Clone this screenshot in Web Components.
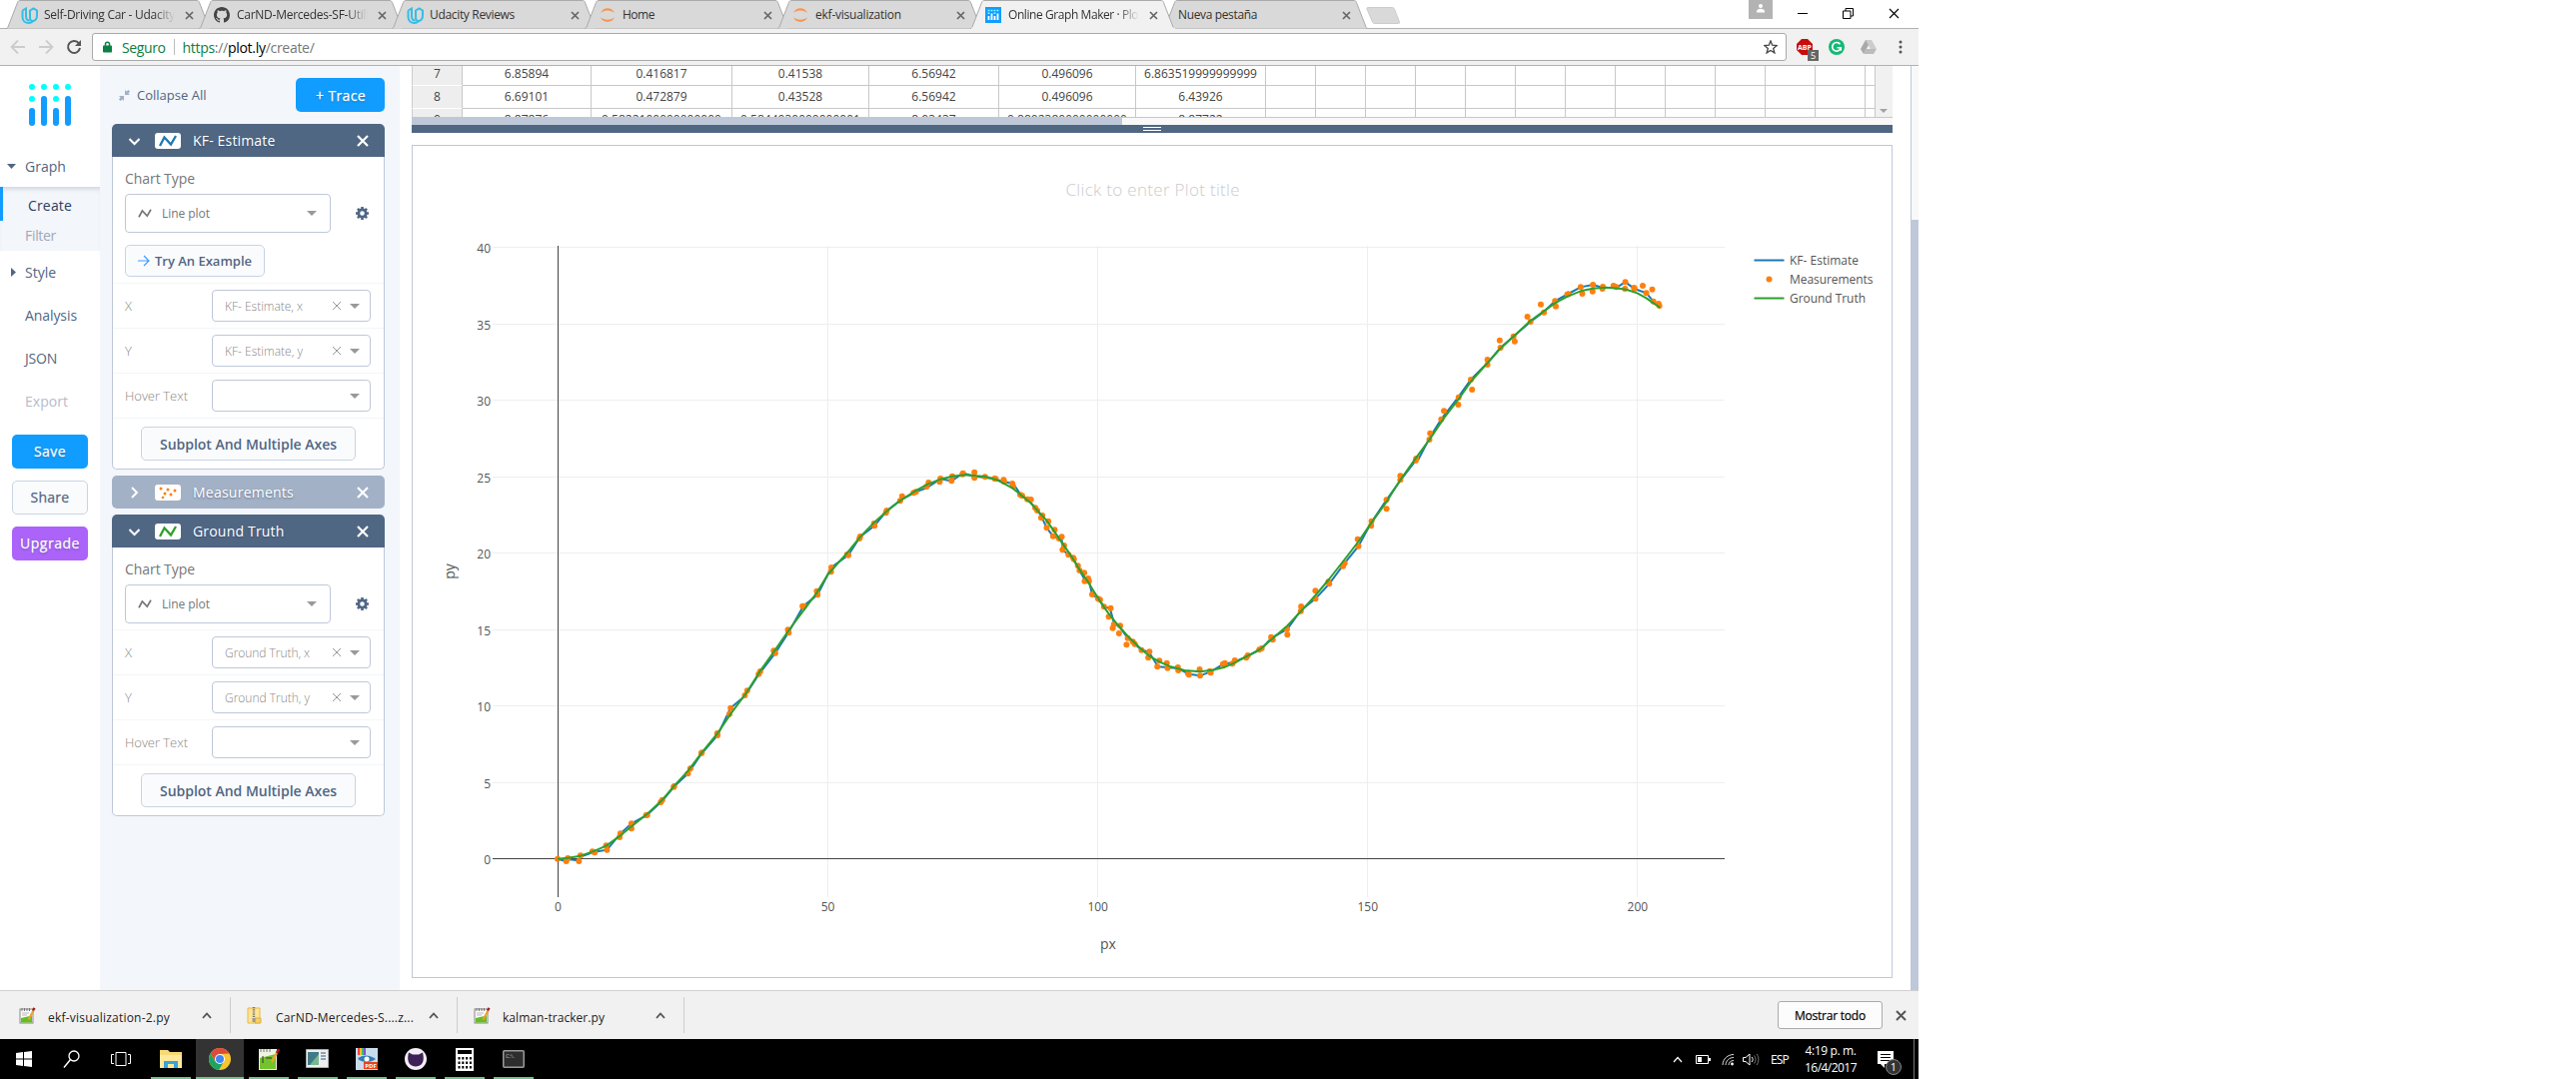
<!DOCTYPE html>
<html lang="es">
<head>
<meta charset="utf-8">
<title>Online Graph Maker · Plotly</title>
<style>
html,body{margin:0;background:#fff}
body{width:2578px;height:1080px;overflow:hidden;font-family:"Open Sans","Noto Sans",sans-serif;font-size:12px;color:#444}
</style>
</head>
<body>
<desktop-screen></desktop-screen>
<script>
const define = (name, render) => customElements.define(name, class extends HTMLElement {
  constructor() { super(); this.attachShadow({ mode: 'open' }); }
  connectedCallback() {
    if (this.ready) return;
    this.ready = true;
    this.shadowRoot.innerHTML = render(this);
  }
});
const svg = (w, h, body, extra = '') => `<svg width="${w}" height="${h}" viewBox="0 0 ${w} ${h}" fill="none" ${extra}>${body}</svg>`;
const base = ':host{box-sizing:border-box}svg{display:block;flex:none}*{box-sizing:border-box}';

const icons = {
  udacity: svg(17, 17, '<path d="M1.500 3.500 5 1.500V9c0 3 1.500 4.500 3.500 4.500" stroke="#35bde6" stroke-width="2"/><path d="M1.500 3.500V10c0 4 3 6 6 6s4-1 5-2.500" stroke="#35bde6" stroke-width="2"/><path d="M9 3.500 12.500 1.500 16 3.500V8c0 4-2 6-4.500 6S9 12 9 9z" stroke="#35bde6" stroke-width="2"/>'),
  github: svg(16, 16, '<path fill="#444" d="M8 0C3.580 0 0 3.580 0 8c0 3.540 2.290 6.530 5.470 7.590.4.070.55-.17.55-.38 0-.19-.01-.82-.01-1.490-2.010.37-2.530-.49-2.690-.94-.09-.23-.48-.94-.82-1.130-.28-.15-.68-.52-.01-.53.63-.01 1.080.58 1.230.82.72 1.210 1.870.87 2.330.66.07-.52.28-.87.51-1.070-1.780-.2-3.640-.89-3.640-3.950 0-.87.31-1.590.82-2.150-.08-.2-.36-1.020.08-2.120 0 0 .67-.21 2.200.82.64-.18 1.320-.27 2-.27s1.360.09 2 .27c1.530-1.040 2.200-.82 2.200-.82.44 1.100.16 1.920.08 2.120.51.56.82 1.270.82 2.150 0 3.070-1.870 3.750-3.650 3.950.29.25.54.73.54 1.480 0 1.070-.01 1.930-.01 2.200 0 .21.15.46.55.38A8.010 8.010 0 0 0 16 8c0-4.420-3.580-8-8-8z"/>'),
  jupyter: svg(16, 16, '<path fill="#f79450" d="M1 6C3-.5 13-.5 15 6 12 2.500 4 2.500 1 6zM1 10c2 6.500 12 6.500 14 0-3 3.500-11 3.500-14 0z"/>'),
  plotly: svg(16, 16, '<rect width="16" height="16" fill="#119dff"/><path d="M3.500 13v-4M6.500 13V6.500M9.500 13v-4M12.500 13V6.500" stroke="#fff" stroke-width="1.800"/><path d="M2.600 3.500h1.800m1.200 0h1.800m1.200 0h1.800m1.200 0h1.800M2.600 6.300h1.800m4.200 0h1.800" stroke="#8ff" stroke-width="1.500"/>'),
  none: '',
  note: svg(17, 17, '<rect x="1" y="2" width="13" height="14" fill="#fafafa" stroke="#888"/><path d="M2 15.500v-4.500l11-2.500v7z" fill="#66bd23"/><path d="M3 1v3m2.500-3v3M8 1v3m2.500-3v3" stroke="#777"/><path d="M3 6h7M3 8h5" stroke="#bbb"/><path d="m9.500 12.500 5-9" stroke="#f0a021" stroke-width="2"/><path d="m14 3.500 1.500-2.600" stroke="#a5181b" stroke-width="2.400"/>'),
  zip: svg(15, 17, '<path d="M1 1h12v15H1z" fill="#ffe594" stroke="#e3b94e"/><path d="M8 11h6v5H8z" fill="#f6cf62" stroke="#dfb143"/><path d="M7 0v12" stroke="#767676" stroke-width="2.400" stroke-dasharray="1.200 1"/><rect x="5.500" y="11" width="3" height="4" fill="#999"/>')
};
const caret = (c = '#999') => svg(10, 5, `<path d="M0 0h10L5 5z" fill="${c}"/>`);
const cross = (s, c, w) => svg(s, s, `<path d="M1 1 ${s-1} ${s-1}M${s-1} 1 1 ${s-1}" stroke="${c}" stroke-width="${w}"/>`);
const zig = (c, w, h) => `<svg width="${w}" height="${h}" viewBox="0 0 18 12" fill="none"><path d="M1 11 5.500 2.500 12 9.500 17 1" stroke="${c}" stroke-width="2.300"/></svg>`;

/* ---------- browser window ---------- */
define('browser-tab', el => {
  const active = el.hasAttribute('active'), fill = active ? '#f1f1f1' : '#d9d9d9';
  const icon = icons[el.getAttribute('icon') || 'none'];
  return `<style>${base}
  :host{display:flex;position:relative;width:193px;height:29px;align-items:center;flex:none;z-index:${active ? 2 : 0};color:#333}
  .bg{position:absolute;left:-6px;top:0}
  .row{position:relative;display:flex;align-items:center;width:168px;margin-left:9px;height:29px;padding-top:1px}
  .ic{width:23px;flex:none}.t{flex:1;height:20px;line-height:20px;overflow:hidden;white-space:nowrap}
  .fade{-webkit-mask:linear-gradient(90deg,#000 84%,transparent);mask:linear-gradient(90deg,#000 84%,transparent)}
  .x{width:10px;margin-left:10px;margin-right:-6px}</style>
  <div class="bg">${svg(207, 29, `<path d="M0 28.500c1 0 1.500-.5 2-1.500L11.500 2.500C12 1 13 .5 14 .5h177c1 0 2 .5 2.500 2L203 27c.5 1 1 1.500 2 1.500" fill="${fill}" stroke="#aaa"/>${active ? '<path d="M1 28.500h204" stroke="#f1f1f1" stroke-width="1.500"/>' : ''}`)}</div>
  <div class="row">${icon ? `<div class="ic">${icon}</div>` : ''}<div class="t ${el.hasAttribute('fade') ? 'fade' : ''}"><slot></slot></div><div class="x">${cross(9, '#666', 1.7)}</div></div>`;
});
define('browser-tabs', () => `<style>${base}
  :host{display:flex;height:29px;box-shadow:inset 0 -1px #b1b1b1;padding-left:12px;background:#fff}
  .new{margin:7px 0 0 4px}.user{margin-left:348px;width:24px;height:19px;background:#b3b3b3;padding:4px 7px}
  .win{display:flex;align-items:center;height:26px;margin-left:25px;gap:35px}</style>
  <browser-tab icon="udacity" fade><fit-text w="131">Self-Driving Car - Udacity</fit-text></browser-tab>
  <browser-tab icon="github" fade><fit-text w="136">CarND-Mercedes-SF-Utilit</fit-text></browser-tab>
  <browser-tab icon="udacity"><fit-text w="85">Udacity Reviews</fit-text></browser-tab>
  <browser-tab icon="jupyter"><fit-text w="32">Home</fit-text></browser-tab>
  <browser-tab icon="jupyter"><fit-text w="86">ekf-visualization</fit-text></browser-tab>
  <browser-tab icon="plotly" active fade><fit-text w="134">Online Graph Maker · Plot</fit-text></browser-tab>
  <browser-tab><fit-text w="79">Nueva pestaña</fit-text></browser-tab>
  <div class="new">${svg(35, 18, '<path d="M2 .5h24c1 0 2 .5 2.500 1.500l5 13c.4 1-.2 1.500-1 1.500H9c-1 0-2-.5-2.500-1.500L1 2C.6 1 1 .5 2 .5z" fill="#d9d9d9" stroke="#ccc"/>')}</div>
  <div class="user">${svg(10, 10, '<circle cx="5" cy="2" r="2" fill="#fff"/><path d="M1 8.500V7c1-3 7-3 8 0v1.500z" fill="#fff"/>')}</div>
  <div class="win">${svg(10, 10, '<path d="M0 5.500h10" stroke="#000"/>')}${svg(11, 11, '<path d="M.5 3h7.500v7.500H.5zM3 3V.5h7.500V8H8" stroke="#000"/>')}${cross(11, '#000', 1.1)}</div>`);
define('browser-toolbar', () => `<style>${base}
  :host{display:flex;height:37px;background:#f1f1f1;border-bottom:1px solid #b1b1b1;align-items:center;padding-left:10px}
  .nav{display:flex;gap:12px;align-items:center;width:82px}
  .bar{display:flex;align-items:center;width:1696px;height:28px;background:#fff;border:1px solid #a9a9a9;border-radius:3px;padding:0 8px 0 10px;font-size:14px}
  .s{color:#0b8043;margin-left:10px}.sep{width:1px;height:16px;background:#bbb;margin:0 8px}
  i{font-style:normal;color:#777}b{font-weight:400;color:#0b8043}.u{flex:1;color:#000}
  .ext{display:flex;align-items:center;margin-left:10px;gap:16px}
  .abp{position:relative}.badge{position:absolute;left:11px;top:11px;width:11px;height:11px;background:#666;color:#fff;font-size:9px;line-height:11px;text-align:center}</style>
  <div class="nav">${svg(16, 16, '<path d="M15 8H2m6-6.500L1.500 8 8 14.500" stroke="#ccc" stroke-width="1.800"/>')}${svg(16, 16, '<path d="M1 8h13M8 1.500 14.500 8 8 14.500" stroke="#ccc" stroke-width="1.800"/>')}${svg(16, 16, '<path d="M13 4.500A6 6 0 1 0 14 9" stroke="#555" stroke-width="2"/><path d="M15 1v6H9z" fill="#555"/>')}</div>
  <div class="bar">${svg(9, 12, '<path d="M2.500 5V3c0-2.500 4-2.500 4 0v2" stroke="#0b8043" stroke-width="1.500"/><rect y="4.500" width="9" height="7" rx=".8" fill="#0b8043"/>')}
  <fit-text class="s" w="43.500">Seguro</fit-text><div class="sep"></div><div class="u"><fit-text w="132"><b>https</b><i>://</i>plot.ly<i>/create/</i></fit-text></div>
  ${svg(14, 14, '<path d="m7 .9 1.700 4.300 4.600.3L9.700 8.400l1.200 4.500L7 10.400l-3.900 2.500 1.200-4.500L.7 5.500l4.600-.3z" stroke="#444" stroke-width="1.300"/>')}</div>
  <div class="ext"><div class="abp">${svg(16, 16, '<path d="M5 0h6l5 5v6l-5 5H5l-5-5V5z" fill="#c70d0a"/><text x="8" y="11" font-size="7" font-weight="700" fill="#fff" text-anchor="middle" textLength="14">ABP</text>')}<div class="badge">5</div></div>
  ${svg(16, 16, '<circle cx="8" cy="8" r="8" fill="#15b877"/><path d="M11.500 5.300A4.300 4.300 0 1 0 12 9.500M8.500 8.700h3.800v3" stroke="#fff" stroke-width="1.600"/>')}
  ${svg(16, 15, '<path d="M5 0h6L5.500 9.500 3 14 0 9z" fill="#aaa"/><path d="M5 0h6l5 9h-6z" fill="#ccc"/><path d="M3 14 5.500 9H16l-3 5z" fill="#bbb"/>')}
  ${svg(16, 14, '<circle cx="8" cy="2" r="1.500" fill="#555"/><circle cx="8" cy="7" r="1.500" fill="#555"/><circle cx="8" cy="12" r="1.500" fill="#555"/>')}</div>`);

/* ---------- plotly workspace ---------- */
define('side-button', el => {
  const k = el.getAttribute('kind');
  const bg = { save: '#119dff', share: '#fafbfd', up: '#ab63fa' }[k];
  return `<style>${base}:host{display:flex;align-items:center;justify-content:center;width:76px;height:34px;margin:0 0 12px 12px;border-radius:5px;font-size:14px;padding-bottom:1px;background:${bg};
  ${k === 'share' ? 'border:1px solid #c8d4e3;color:#506784' : 'color:#fff;text-shadow:0 1px 2px rgba(42,63,95,.5)'};-webkit-text-stroke:.25px}</style><slot></slot>`;
});
define('side-nav', () => `<style>${base}
  :host{display:block;width:100px;background:#fff;padding-top:18px;font-size:14px;color:#506784}
  .logo{margin:0 0 19px 29px}.i{display:flex;align-items:center;height:43px;padding-left:11px}.i.g{height:42px}
  .a{width:14px}.sub{background:#f3f6fa;height:64px;box-shadow:inset 0 5px 5px -3px #ccd3dd}
  .c{border-left:3px solid #119dff;height:34px;line-height:38px;padding-left:25px;color:#2a3f5f}.f{height:30px;line-height:29px;padding-left:25px;color:#a1a9b8}
  .dim{color:#b4bccb}.btns{padding-top:12px}</style>
  <div class="logo">${svg(42, 42, '<g fill="#0ff"><circle cx="3" cy="3" r="3"/><circle cx="15" cy="3" r="3"/><circle cx="27" cy="3" r="3"/><circle cx="39" cy="3" r="3"/><circle cx="3" cy="15" r="3"/><circle cx="27" cy="15" r="3"/></g><g fill="#119dff"><rect y="24" width="6" height="18" rx="3"/><rect x="12" y="12" width="6" height="30" rx="3"/><rect x="24" y="24" width="6" height="18" rx="3"/><rect x="36" y="12" width="6" height="30" rx="3"/></g>')}</div>
  <div class="i g"><span class="a" style="margin-left:-4px;width:18px">${svg(9, 5, '<path d="M0 0h9L4.500 5z" fill="#506784"/>')}</span><fit-text w="41">Graph</fit-text></div>
  <div class="sub"><div class="c"><fit-text w="44">Create</fit-text></div><div class="f"><fit-text w="31">Filter</fit-text></div></div>
  <div class="i"><span class="a">${svg(5, 9, '<path d="M0 0v9l5-4.500z" fill="#506784"/>')}</span><fit-text w="31">Style</fit-text></div>
  <div class="i"><span class="a"></span><fit-text w="52">Analysis</fit-text></div>
  <div class="i"><span class="a"></span><fit-text w="32">JSON</fit-text></div>
  <div class="i dim"><span class="a"></span><fit-text w="43">Export</fit-text></div>
  <div class="btns"><side-button kind="save"><fit-text w="32">Save</fit-text></side-button><side-button kind="share"><fit-text w="39">Share</fit-text></side-button><side-button kind="up"><fit-text w="60">Upgrade</fit-text></side-button></div>`);
define('data-row', el => `<style>${base}
  :host{display:flex;height:45px;border-top:1px solid #f3f6fa;padding:6px 13px 0 12px;justify-content:space-between;color:#888;font-size:13px;font-weight:300}
  .l{line-height:33px}.sel{display:flex;align-items:center;width:159px;height:32px;border:1px solid #bec8d9;border-radius:4px;padding:0 10px 0 12px;font-size:12px}
  .v{flex:1}.cr{margin:0 8px 0 0}</style>
  <div class="l"><fit-text w="${el.getAttribute('lw')}">${el.getAttribute('label')}</fit-text></div>
  <div class="sel"><div class="v">${el.hasAttribute('value') ? `<fit-text w="${el.getAttribute('vw')}">${el.getAttribute('value')}</fit-text>` : ''}</div>${el.hasAttribute('value') ? `<div class="cr">${cross(10, '#999', 1)}</div>` : ''}${caret()}</div>`);
define('trace-card', el => {
  const n = el.getAttribute('name'), w = el.getAttribute('vw'), c = el.getAttribute('color'), closed = el.hasAttribute('closed');
  const gear = svg(13, 13, '<circle cx="6.500" cy="6.500" r="3.700" stroke="#506784" stroke-width="2.800"/><path d="M6.500 0v2.500m0 8V13M0 6.500h2.500m8 0H13M1.900 1.900l1.800 1.800m5.600 5.600 1.800 1.800m0-9.200L9.300 3.700M3.700 9.300l-1.800 1.800" stroke="#506784" stroke-width="2.600"/>');
  const dots = svg(18, 12, '<g fill="#ff7f0e"><circle cx="2" cy="2" r="1.500"/><circle cx="9" cy="3" r="1.500"/><circle cx="16" cy="4" r="1.500"/><circle cx="6" cy="7" r="1.500"/><circle cx="12" cy="8" r="1.500"/><circle cx="4" cy="11" r="1.300"/></g>');
  return `<style>${base}
  :host{display:block;width:273px;margin-bottom:6px;margin-left:12px;color:#777}
  .h{display:flex;align-items:center;height:33px;background:${closed ? '#a2b1c6' : '#506784'};border-radius:${closed ? '5px' : '5px 5px 0 0'};color:#fff;font-size:14px;padding:0 16px 0 16px;text-shadow:0 1px 2px rgba(42,63,95,.5)}
  .ch{width:27px}.ic{width:26px;height:16px;border-radius:3px;background:#fff;display:flex;align-items:center;justify-content:center;margin-right:12px}
  .t{flex:1;padding-bottom:1px}.b{border:1px solid #bec8d9;border-top:0;border-radius:0 0 5px 5px;background:#fff}
  .ct{font-size:14px;padding:11px 0 0 12px;height:37px;line-height:22px}
  .r{display:flex;align-items:center;padding-left:12px;margin-bottom:${el.hasAttribute('example') ? 12 : 6}px}
  .s{display:flex;align-items:center;width:206px;height:39px;border:1px solid #bec8d9;border-radius:4px;padding:0 13px 0 12px;margin-right:25px;font-size:12px}
  .s div{flex:1;margin-left:10px}
  .btn{display:flex;align-items:center;background:#fafbfd;border:1px solid #c8d4e3;border-radius:5px;color:#506784;font-weight:600}
  .ex{width:140px;height:32px;margin:0 0 6px 12px;padding-left:12px;gap:5px;font-size:13px}
  .f{border-top:1px solid #f3f6fa;padding:8px 0 0 28px;height:51px}.sp{width:215px;height:34px;justify-content:center;font-size:14px}</style>
  <div class="h"><div class="ch">${closed ? svg(12, 12, '<path d="m4 1 5 5-5 5" stroke="#fff" stroke-width="2"/>') : svg(12, 12, '<path d="m1.500 4 5 5 5-5" stroke="#fff" stroke-width="2"/>')}</div>
  <div class="ic">${closed ? dots : zig(c, 18, 12)}</div><div class="t"><fit-text w="${el.getAttribute('tw')}">${n}</fit-text></div>${cross(12, '#fff', 2.2)}</div>
  ${closed ? '' : `<div class="b"><div class="ct"><fit-text w="70">Chart Type</fit-text></div>
  <div class="r"><div class="s">${zig('#777', 14, 9)}<div><fit-text w="48">Line plot</fit-text></div>${caret()}</div>${gear}</div>
  ${el.hasAttribute('example') ? `<div class="btn ex">${svg(12, 12, '<path d="M0 6h11M6 1l5 5-5 5" stroke="#409cff" stroke-width="1.200"/>')}<fit-text w="97">Try An Example</fit-text></div>` : ''}
  <data-row label="X" lw="8" value="${n}, x" vw="${w}"></data-row><data-row label="Y" lw="8" value="${n}, y" vw="${w}"></data-row><data-row label="Hover Text" lw="63"></data-row>
  <div class="f"><div class="btn sp"><fit-text w="177">Subplot And Multiple Axes</fit-text></div></div></div>`}`;
});
define('trace-panel', () => `<style>${base}
  :host{display:block;width:300px;background:#f3f6fa;padding-top:12px}
  .top{display:flex;align-items:center;padding:0 15px 0 19px;height:34px;margin-bottom:12px;color:#506784;font-size:13px}
  .l{flex:1;margin-left:7px}.tr{width:89px;height:34px;border-radius:5px;background:#119dff;color:#fff;font-size:14px;display:flex;align-items:center;justify-content:center;padding-left:1px;text-shadow:0 1px 2px rgba(42,63,95,.5);-webkit-text-stroke:.25px}</style>
  <div class="top">${svg(11, 11, '<path d="M6 0v5h5L9.500 3.500l1.500-2L9.500 0l-2 1.500zM5 11V6H0l1.500 1.500L0 9.500 1.500 11l2-1.500z" fill="#a2b1c6"/>')}<div class="l"><fit-text w="69.500">Collapse All</fit-text></div><div class="tr"><fit-text w="50">+ Trace</fit-text></div></div>
  <trace-card name="KF- Estimate" tw="82.500" vw="78" color="#1f77b4" example></trace-card>
  <trace-card name="Measurements" tw="101" closed></trace-card>
  <trace-card name="Ground Truth" tw="91.500" vw="85" color="#2ca02c"></trace-card>`);
define('data-grid', () => {
  const cols = [51, 129, 141, 137, 130, 137, 130].concat(Array(12).fill(50), [10]);
  const rows = [['7', '6.85894', '0.416817', '0.41538', '6.56942', '0.496096', '6.863519999999999'], ['8', '6.69101', '0.472879', '0.43528', '6.56942', '0.496096', '6.43926'], ['9', '8.87876', '0.5822100000000000', '0.5844030000000001', '8.93437', '0.8802380000000000', '8.87722']];
  return `<style>${base}
  :host{display:block;width:1482px;height:67px;overflow:hidden}
  .v{display:flex;height:51px;overflow:hidden}.g{display:grid;grid-template-columns:${cols.map(c => c + 'px').join(' ')};grid-template-rows:20px 23px 23px;width:1465px}
  .g div{border-right:1px solid #c8c8c8;border-bottom:1px solid #c8c8c8;text-align:center;line-height:22px;white-space:nowrap;color:#444}
  .g div.one{line-height:16px}.g div.n{background:#eee;border-bottom-color:#fff;border-left:1px solid #ccc}
  .sb{width:17px;background:#f1f1f1;display:flex;align-items:flex-end;padding:0 0 0 4px}
  .hs{height:8px;background:#f8f8f8;border-top:1px solid #bec8d9}.hs div{width:711px;height:8px;background:#bec8d9;margin-top:-1px}
  .d{height:8px;background:#506784;display:flex;flex-direction:column;align-items:center;gap:2px;padding-top:2px}.d i{width:18px;height:1px;background:#fff}</style>
  <div class="v"><div class="g">${rows.map((r, k) => cols.map((_, j) => `<div class="${j ? '' : 'n '}${k ? '' : 'one'}">${r[j] || ''}</div>`).join('')).join('')}</div><div class="sb">${svg(8, 8, '<path d="M0 0h8L4 4z" fill="#a3a3a3"/>')}</div></div>
  <div class="hs"><div></div></div><div class="d"><i></i><i></i></div>`;
});

/* Each series is split in three stretches; every stretch has its own origin. */
const origins = [[420, 620], [800, 420], [1300, 240]];
const series = {
  kf: ['349,719 371,726 375,720 403,724 407,713 443,698 474,692 508,643 536,613 575,588 614,545 644,502 679,463 714,402 754,348 787,266 823,230 860,162 900,101 934,38',
    '10,560 46,526 81,444 124,407 154,352 190,319 221,274 258,240 295,217 322,205 357,178 385,184 414,161 443,170 470,174 495,178 517,187 541,192 561,227 580,242 602,270 612,290 626,325 642,350 657,357 664,358 666,391 681,406 694,419 709,453 722,480 733,485 741,525 758,540 772,563 786,566 796,610 812,625 831,656 866,692 884,697 908,742 932,744 959,747 986,764 1014,769 1041,757 1072,735 1100,728 1135,710 1168,690 1196,655 1235,629 1269,573 1306,538 1341,493 1380,431 1415,380 1447,310 1486,241 1521,183 1560,123',
    '302,660 332,592 360,539 403,473 435,420 477,370 510,324 546,287 586,246 620,216 648,184 682,162 713,142 744,135 769,144 803,144 826,127 849,147 879,160 897,185 914,204'],
  m: ['349,719 371,726 375,717 403,726 407,709 437,697 443,700 472,679 474,692 506,654 508,643 536,628 536,613 573,588 576,587 610,549 614,542 643,503 644,501 679,463 685,448 713,402 714,400 754,348 753,342 784,284 787,266 823,228 829,214 858,164 862,156 896,94 900,101 932,31 934,40',
    '8,560 12,560 44,515 46,526 80,457 81,444 121,405 124,407 152,357 154,351 189,312 190,319 219,280 221,273 255,244 260,230 289,220 295,217 322,201 327,189 355,187 357,177 385,184 387,170 414,161 413,164 443,158 443,175 470,172 494,177 497,178 517,181 518,186 539,192 541,200 559,226 564,229 577,239 586,240 597,265 602,273 615,288 612,295 630,305 626,325 646,331 642,350 664,352 657,357 670,378 666,391 681,406 693,415 695,419 705,439 709,453 721,460 731,477 722,485 733,485 741,525 756,538 761,541 771,562 788,566 783,592 796,615 793,626 812,619 809,642 831,656 828,676 844,667 849,674 866,692 886,697 883,715 911,724 906,742 930,731 932,746 958,744 959,753 984,763 986,766 1013,750 1014,769 1039,755 1041,760 1072,734 1077,731 1096,733 1102,723 1131,715 1135,708 1164,691 1170,687 1194,653 1198,661 1234,629 1235,646 1270,561 1269,575 1306,514 1306,538 1339,487 1341,493 1376,440 1380,431 1413,359 1415,380 1448,305 1447,319 1486,241 1486,268 1521,169 1521,181 1560,123 1561,117',
    '332,581 330,600 367,514 360,539 404,473 403,495 435,420 438,450 477,360 477,375 508,302 510,324 543,290 546,305 578,231 586,246 612,194 620,218 648,184 650,200 679,164 682,163 713,142 717,162 744,135 743,155 769,141 768,147 796,138 803,142 826,127 825,147 848,144 849,147 870,138 879,160 894,149 897,185 910,192 912,198'],
  gt: ['349,719 375,716 407,710 443,695 472,680 508,649 536,622 575,585 614,542 644,500 679,455 714,400 754,342 787,284 826,222 860,158 900,91 934,33',
    '0,590 44,520 72,465 121,400 154,352 190,308 221,275 258,241 291,216 325,194 357,179 387,170 420,166 470,171 500,181 540,206 560,226 585,250 604,275 625,302 646,337 665,370 690,413 710,452 730,486 745,515 762,547 780,578 800,608 831,650 866,690 886,710 911,727 940,742 975,753 1014,757 1045,752 1077,743 1102,730 1135,709 1168,688 1200,655 1234,620 1270,575 1306,528 1340,480 1376,426 1415,366 1447,311 1486,247 1521,181 1560,116',
    '332,597 367,535 403,480 437,423 477,370 510,326 543,290 586,243 620,214 648,190 680,170 713,154 744,146 777,143 810,146 830,150 856,160 879,175 897,190 914,204']
};
const points = key => series[key].flatMap((s, i) => s.split(' ').map(p => {
  const [x, y] = p.split(',').map(Number);
  return [+(origins[i][0] + x / 2.529).toFixed(2), +(origins[i][1] + y / 3).toFixed(2)];
}));
define('line-chart', () => {
  let g = '';
  for (let v = 5; v <= 40; v += 5) { const y = Math.round(859 - v * 15.3) + .5; g += `<path d="M493 ${y}H1726" stroke="#eee"/>`; }
  for (let v = 50; v <= 200; v += 50) g += `<path d="M${Math.round(558 + v * 5.402) + .5} 246V898" stroke="#eee"/>`;
  g += '<path d="M493 859.500H1726M558.500 246V898" stroke="#444"/>';
  let t = '';
  for (let v = 0; v <= 40; v += 5) t += `<text x="491" y="${865 - v * 15.3}" text-anchor="end">${v}</text>`;
  for (let v = 0; v <= 200; v += 50) t += `<text x="${558.5 + v * 5.402}" y="912" text-anchor="middle">${v}</text>`;
  return `<style>${base}:host{display:block;width:1482px;height:834px;border:1px solid #bec8d9;margin-top:12px}
  text{font:12px "Open Sans",sans-serif;fill:#555}text.big{font-size:14px}text.title{font-size:17px;font-weight:300;fill:#ccc}</style>
  <svg width="1480" height="832" viewBox="413 146 1480 832" fill="none">${g}
  <polyline points="${points('kf').join(' ')}" stroke="#1f77b4" stroke-width="2"/>
  <g fill="#ff7f0e">${points('m').map(p => `<circle cx="${p[0]}" cy="${p[1]}" r="3"/>`).join('')}</g>
  <polyline points="${points('gt').join(' ')}" stroke="#2ca02c" stroke-width="2" stroke-linejoin="round"/>${t}
  <text class="title" x="1066.500" y="196" textLength="174">Click to enter Plot title</text>
  <text class="big" x="1109" y="950" text-anchor="middle">px</text><text class="big" transform="translate(455 572) rotate(-90)" text-anchor="middle">py</text>
  <path d="M1755.500 260.500h30" stroke="#1f77b4" stroke-width="2"/><circle cx="1770.500" cy="279.500" r="3" fill="#ff7f0e"/><path d="M1755.500 298.500h30" stroke="#2ca02c" stroke-width="2"/>
  <text x="1791" y="265" textLength="69">KF- Estimate</text><text x="1791" y="284" textLength="83.500">Measurements</text><text x="1791" y="303" textLength="76">Ground Truth</text></svg>`;
});
define('plot-workspace', () => `<style>${base}:host{display:flex;height:925px;overflow:hidden;background:#fff;flex:none}
  .m{width:1512px;padding-left:12px}.s{width:8px;border-left:1px solid #bec8d9;background:#f8f8f8;padding-top:154px}.s div{height:771px;background:#bec8d9}</style>
  <side-nav></side-nav><trace-panel></trace-panel><div class="m"><data-grid></data-grid><line-chart></line-chart></div><div class="s"><div></div></div>`);

/* ---------- download shelf and taskbar ---------- */
define('download-item', el => `<style>${base}:host{display:flex;align-items:center;height:36px;width:${el.getAttribute('w')}px;border-right:1px solid #ccc;padding-left:${el.getAttribute('p')}px;color:#222;flex:none}
  .t{flex:1;margin:4px 0 0 12px}.c{margin-right:18px}.i{width:17px}</style>
  <div class="i">${icons[el.getAttribute('icon')]}</div><div class="t"><slot></slot></div><div class="c">${svg(10, 8, '<path d="m1 7 4-4.500L9 7" stroke="#555" stroke-width="1.800"/>')}</div>`);
define('download-shelf', () => `<style>${base}:host{display:flex;height:49px;border-top:1px solid #d0d0d0;background:#f1f1f1;align-items:center;padding-right:12px;flex:none}
  .b{margin-left:auto;width:105px;height:28px;border:1px solid #aaa;border-radius:3px;background:#fcfcfc;color:#000;display:flex;align-items:center;justify-content:center;margin-right:13px;-webkit-text-stroke:.2px}</style>
  <download-item icon="note" w="231" p="19"><fit-text w="122">ekf-visualization-2.py</fit-text></download-item>
  <download-item icon="zip" w="227" p="16"><fit-text w="138">CarND-Mercedes-S....z...</fit-text></download-item>
  <download-item icon="note" w="227" p="16"><fit-text w="102">kalman-tracker.py</fit-text></download-item>
  <div class="b"><fit-text w="71">Mostrar todo</fit-text></div>${cross(11, '#555', 2)}`);
define('task-app', el => `<style>${base}:host{display:flex;width:${el.getAttribute('w') || 49}px;height:40px;align-items:center;justify-content:center;flex:none}
  .b{width:${el.hasAttribute('active') ? 48 : 40}px;height:40px;display:flex;align-items:center;justify-content:center;
  ${el.hasAttribute('open') ? 'border-bottom:2px solid #76c090;padding-top:2px;' : ''}${el.hasAttribute('active') ? 'background:#333;' : ''}}</style><div class="b"><slot></slot></div>`);
define('task-bar', () => {
  let keys = '';
  for (let y = 0; y < 3; y++) for (let x = 0; x < 4; x++) keys += `<rect x="${2.5 + x * 3.8}" y="${9 + y * 4.5}" width="2" height="2.500" fill="#000"/>`;
  return `<style>${base}:host{display:flex;height:40px;background:#000;color:#fff;align-items:center;position:relative;flex:none}
  .tray{margin-left:auto;display:flex;align-items:center;height:40px;padding-right:4px}
  .clock{width:54px;text-align:center;line-height:17px;margin-left:15px;padding-bottom:1px}.nt{position:relative;margin-left:20px}
  .n{position:absolute;left:8px;top:8px;width:16px;height:16px;border-radius:50%;background:#333;border:1px solid #888;font-size:11px;line-height:14px;text-align:center}
  .end{width:1px;height:40px;background:#777;margin-left:20px}</style>
  <task-app w="48">${svg(16, 16, '<path d="m0 2 7-1v6.500H0zm8-1 8-1v7.500H8zM0 8.500h7V15l-7-1zm8 0h8V16l-8-1z" fill="#fff"/>')}</task-app>
  <task-app w="48">${svg(18, 18, '<circle cx="11" cy="6" r="5" stroke="#fff" stroke-width="1.300"/><path d="m7.500 9.500-6.500 8" stroke="#fff" stroke-width="1.400"/>')}</task-app>
  <task-app w="50">${svg(20, 14, '<path d="M5 .5h10v13H5zM3 2.500H.5v9H3M17 2.500h2.500v9H17" stroke="#fff"/>')}</task-app>
  <task-app w="49" open>${svg(22, 20, '<path d="M0 1h8l2 2h12v16H0z" fill="#f8d775"/><path d="M0 6h22v13H0z" fill="#ffe79b"/><path d="M4 19v-7h14v7h-4v-4H8v4z" fill="#35a5dc"/>')}</task-app>
  <task-app w="49" open active>${svg(22, 22, '<circle cx="11" cy="11" r="11" fill="#f7c52e"/><path d="M1.500 5.500A11 11 0 0 1 20.500 5.500L11 6 6.500 13.500z" fill="#dd4b3e"/><path d="M1.500 5.500A11 11 0 0 0 10 22l5-8.500-4 2.500-5-3z" fill="#1da462"/><circle cx="11" cy="11" r="5" fill="#fff"/><circle cx="11" cy="11" r="4" fill="#4285f4"/>')}</task-app>
  <task-app w="49" open>${svg(22, 23, '<rect x="1" y="1" width="18" height="21" fill="#eef4e2"/><path d="M2 21V10l16-4v15z" fill="#74c32b"/><path d="M3 1v3m3-3v3m3-3v3m3-3v3" stroke="#777"/><path d="M5 8v7m3-5h6" stroke="#333"/><path d="m14 14 5-9" stroke="#f4a329" stroke-width="2.300"/><path d="m19 5 2-4" stroke="#a5181b" stroke-width="2.600"/>')}</task-app>
  <task-app w="49" open>${svg(24, 20, '<path d="M.5.5h22v18H.5z" fill="#eee" stroke="#aaa"/><path d="M2 3h11v13H2z" fill="#417a87"/><path d="M4 16 13 5v11z" fill="#7bb692"/><path d="M15 4h5m-5 3h5m-5 3h5" stroke="#8aa5bd" stroke-width="2"/>')}</task-app>
  <task-app w="49" open>${svg(22, 22, '<rect width="22" height="22" fill="#c9dded"/><path d="M3 0v7" stroke="#e44" stroke-width="2"/><path d="M5 0v7" stroke="#fb3" stroke-width="2"/><path d="M7 0v7" stroke="#4b6" stroke-width="2"/><path d="M9 0v7" stroke="#75c" stroke-width="2"/><path d="M2 11c5-5 12-4 18 0-5 4-13 4-18 0z" fill="#347bb2"/><circle cx="11" cy="11" r="2.500" fill="#fff"/><rect x="8" y="14" width="14" height="7" fill="#e6421e"/><text x="15" y="20" font-size="6" font-weight="700" fill="#fff" text-anchor="middle">PDF</text>')}</task-app>
  <task-app w="49" open>${svg(22, 22, '<circle cx="11" cy="11" r="11" fill="#f3eef8"/><path d="M4 4.500 8 6.500h6l4-2c1 4 1.500 9-1.500 12-3 2.500-8 2.500-11 0C2.500 13.500 3 8 4 4.500z" fill="#3e2257"/>')}</task-app>
  <task-app w="49" open>${svg(18, 23, `<rect width="18" height="23" fill="#fff"/><rect x="2" y="2" width="14" height="4" fill="#000"/>${keys}`)}</task-app>
  <task-app w="49" open>${svg(22, 18, '<rect x=".75" y=".75" width="20.500" height="16.500" rx="1" fill="#2d2d2d" stroke="#9a9a9a" stroke-width="1.500"/><text x="3" y="8" font-size="6" fill="#bbb">C:\\.</text>')}</task-app>
  <div class="tray">${svg(10, 7, '<path d="m1 6 4-4.500L9 6" stroke="#fff" stroke-width="1.200"/>')}
  ${svg(15, 9, '<path d="M.5.5h12v8H.5z" stroke="#fff"/><path d="M2 2h4v5H2zm11 1h2v3h-2z" fill="#fff"/>', 'style="margin-left:13px"')}
  ${svg(13, 13, '<circle cx="10.500" cy="11" r="1.400" fill="#fff"/><path d="M1 12C1 6 6 1.500 12 1.500M4 12c0-4 3.500-7.500 8-7.500M7 12c0-2.500 2-4.500 5-4.500" stroke="#ddd"/>', 'style="margin-left:11px"')}
  ${svg(17, 13, '<path d="M.5 4.500H3L7 1v11L3 8.500H.5z" stroke="#fff"/><path d="M9 4c1.500 1.500 1.500 3.500 0 5" stroke="#fff"/><path d="M11.500 2.500c2 2.500 2 5.500 0 8M14 1c2.500 3 2.500 8 0 11" stroke="#777"/>', 'style="margin-left:8px"')}
  <fit-text w="18" style="margin-left:11px">ESP</fit-text>
  <div class="clock"><fit-text w="51">4:19 p. m.</fit-text><br><fit-text w="52">16/4/2017</fit-text></div>
  <div class="nt">${svg(16, 17, '<path d="M0 0h16v13H7v4l-4-4H0z" fill="#fff"/><path d="M3 3.500h10m-10 3h10m-10 3h10" stroke="#000"/>')}<div class="n">1</div></div><div class="end"></div></div>`;
});
define('desktop-screen', () => `<style>:host{display:flex;flex-direction:column;width:1920px;height:1080px;overflow:hidden}</style>
  <browser-tabs></browser-tabs><browser-toolbar></browser-toolbar><plot-workspace></plot-workspace><download-shelf></download-shelf><task-bar></task-bar>`);

/* A single-line label whose tracking is adjusted to fill a given width. */
customElements.define('fit-text', class extends HTMLElement {
  constructor() { super(); this.attachShadow({ mode: 'open' }); }
  connectedCallback() {
    this.shadowRoot.innerHTML = '<style>:host{display:inline-block;white-space:nowrap;flex:none}</style><span><slot></slot></span>';
    const w = +this.getAttribute('w'), now = this.shadowRoot.querySelector('span').getBoundingClientRect().width;
    this.style.width = w + 'px';
    this.style.letterSpacing = ((w - now) / this.textContent.length).toFixed(3) + 'px';
  }
});
</script>
</body>
</html>
